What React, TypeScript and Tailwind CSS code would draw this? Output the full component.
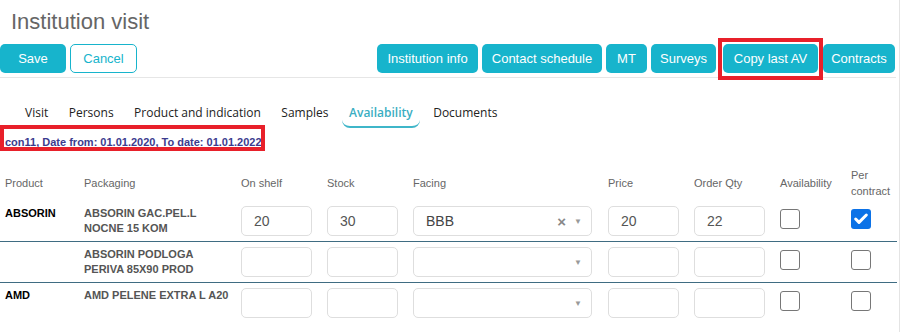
import { Check } from "lucide-react";

const teal = "bg-[#17b4cc]";

const rightButtons = [
  { label: "Institution info", w: "w-[101px]" },
  { label: "Contact schedule", w: "w-[120px]" },
  { label: "MT", w: "w-[41px]" },
  { label: "Surveys", w: "w-[65px]" },
];

const tabs = ["Visit", "Persons", "Product and indication", "Samples", "Availability", "Documents"];

const headers = ["Product", "Packaging", "On shelf", "Stock", "Facing", "Price", "Order Qty", "Availability", "Per contract"];

const rows = [
  { product: "ABSORIN", packaging: "ABSORIN GAC.PEL.L NOCNE 15 KOM", onShelf: "20", stock: "30", facing: "BBB", price: "20", qty: "22", avail: false, contract: true },
  { product: "", packaging: "ABSORIN PODLOGA PERIVA 85X90 PROD", onShelf: "", stock: "", facing: "", price: "", qty: "", avail: false, contract: false },
  { product: "AMD", packaging: "AMD PELENE EXTRA L A20", onShelf: "", stock: "", facing: "", price: "", qty: "", avail: false, contract: false },
];

const cols = "grid grid-cols-[84px_157px_86px_86px_195px_86px_86px_71px_46px]";

function TextBox({ value }: { value: string }) {
  return (
    <div className="w-[71px] h-[30px] border border-[#dedede] rounded-[5px] pl-[12px] flex items-center text-[14px] text-[#555]">
      {value}
    </div>
  );
}

function Box({ checked }: { checked: boolean }) {
  return checked ? (
    <div className="mt-[3px] w-[20px] h-[20px] rounded-[3px] bg-[#0b72e7] flex items-center justify-center text-white">
      <Check size={16} strokeWidth={4.5} />
    </div>
  ) : (
    <div className="mt-[3px] w-[20px] h-[20px] rounded-[3px] border border-[#777]" />
  );
}

export default function App() {
  return (
    <div className="w-[904px] h-[332px] bg-white overflow-hidden font-['Liberation_Sans',Arial,sans-serif]">
      <div className="w-[900px] h-full border-r border-[#e4e4e4]">
        <h1 className="pl-[11px] pt-[9px] text-[22px] leading-[26px] text-[#666]">Institution visit</h1>

        <div className="mt-[9px] w-[896px] pb-[4px] border-b border-[#e6e6e6] flex justify-between">
          <div className="flex gap-[4px]">
            <button className={`${teal} w-[66px] h-[29px] rounded-[5px] text-white text-[13px]`}>Save</button>
            <button className="w-[67px] h-[29px] rounded-[5px] border border-[#17b4cc] text-[#17b4cc] text-[13px]">Cancel</button>
          </div>
          <div className="flex">
            {rightButtons.map((b) => (
              <button key={b.label} className={`${teal} ${b.w} h-[29px] ml-[4px] rounded-[5px] text-white text-[13px]`}>
                {b.label}
              </button>
            ))}
            <div className="relative ml-[7px]">
              <button className={`${teal} w-[95px] h-[29px] rounded-[5px] text-white text-[13px]`}>Copy last AV</button>
              <div className="absolute -left-[5px] -right-[5px] -top-[6px] -bottom-[7px] border-4 border-[#e8202a]" />
            </div>
            <button className={`${teal} w-[72px] h-[29px] ml-[5px] mr-px rounded-[5px] text-white text-[13px]`}>Contracts</button>
          </div>
        </div>

        <div className="mt-[26px] pl-[18px] flex gap-[6.5px] font-['Open_Sans',sans-serif] text-[12px] leading-[17px]">
          {tabs.map((t) =>
            t === "Availability" ? (
              <div key={t} className="px-[7px] pb-[5px] border-b-2 border-[#3fb6c9] rounded-[8px] text-[#3aaec2] font-semibold">
                {t}
              </div>
            ) : (
              <div key={t} className="px-[7px] pb-[5px] border-b-2 border-transparent text-[#222]">
                {t}
              </div>
            )
          )}
        </div>

        <div className="-mt-[3px] w-[265px] h-[26px] border-4 border-[#e8202a] pl-px overflow-hidden whitespace-nowrap">
          <a className="text-[11px] leading-[18px] font-bold text-[#3b3b8e] underline">
            con11, Date from: 01.01.2020, To date: 01.01.2022
          </a>
        </div>

        <div className="mt-[14px] w-[897px] text-[11px]">
          <div className={`${cols} h-[36px] items-center text-[#666] leading-[16px]`}>
            {headers.map((h, i) => (
              <div key={h} className={i === 0 ? "pl-[5px]" : ""}>
                {h}
              </div>
            ))}
          </div>

          {rows.map((r, i) => (
            <div
              key={i}
              className={`${cols} py-[5px] leading-[15px] ${i < rows.length - 1 ? "border-b border-[#3f6c82]" : ""}`}
            >
              <div className="pl-[5px] font-bold text-black">{r.product}</div>
              <div className="pr-[12px] font-bold text-[#555]">{r.packaging}</div>
              <TextBox value={r.onShelf} />
              <TextBox value={r.stock} />
              <div className="w-[179px] h-[30px] border border-[#dedede] rounded-[5px] pl-[12px] pr-[9px] flex items-center text-[14px] text-[#444]">
                <span className="flex-1">{r.facing}</span>
                {r.facing && <span className="text-[#888] text-[15px] font-bold mr-[8px]">×</span>}
                <span className="text-[#999] text-[8px]">▼</span>
              </div>
              <TextBox value={r.price} />
              <TextBox value={r.qty} />
              <Box checked={r.avail} />
              <Box checked={r.contract} />
            </div>
          ))}
        </div>
      </div>
    </div>
  );
}
